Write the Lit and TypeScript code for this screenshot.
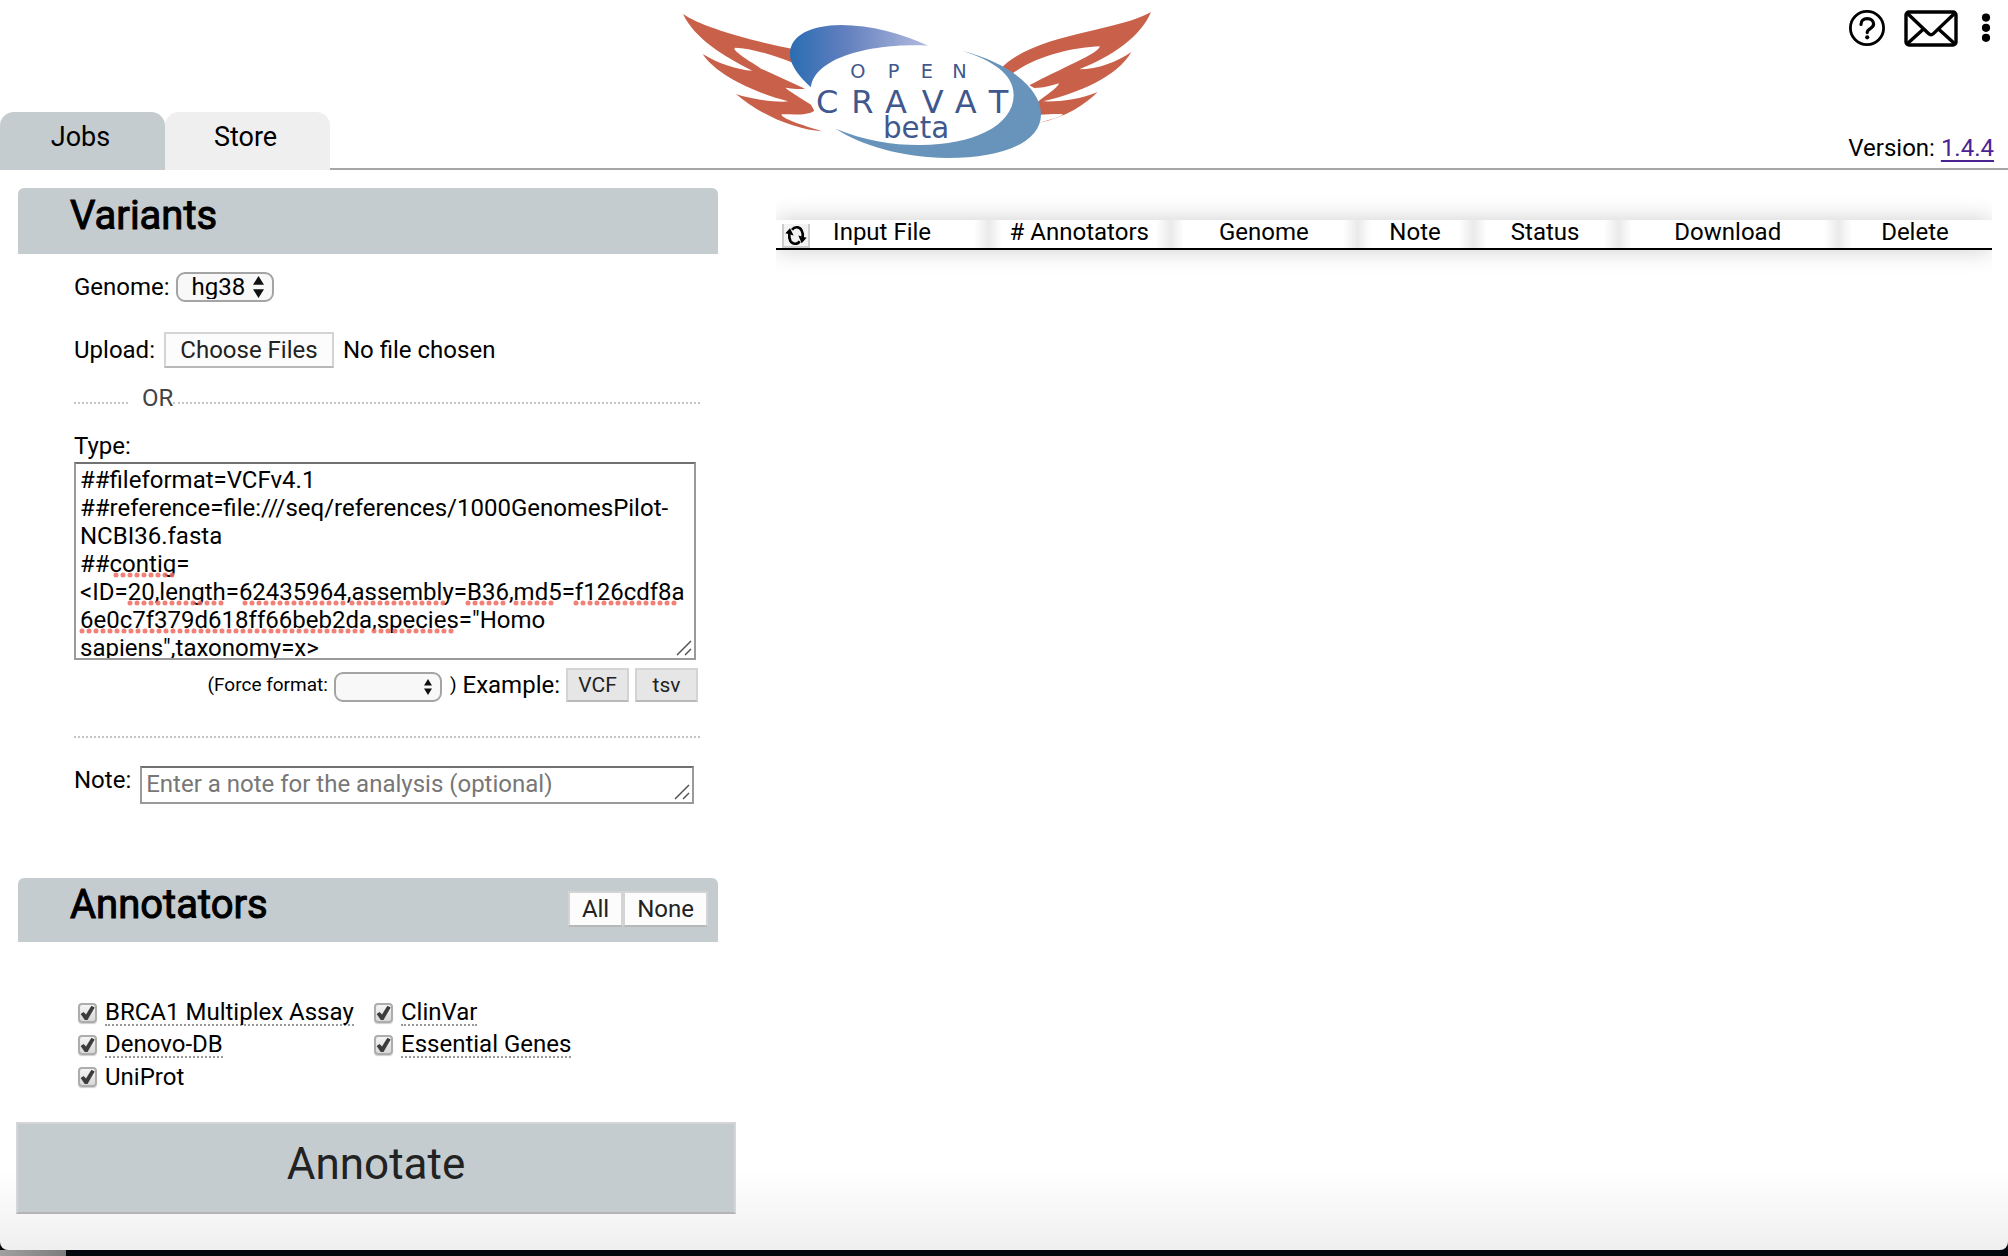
import { LitElement, html, css, svg } from "lit";
import { customElement } from "lit/decorators.js";

const JOB_COLUMNS = [
  { label: "Input File", width: 212 },
  { label: "# Annotators", width: 182 },
  { label: "Genome", width: 187 },
  { label: "Note", width: 115 },
  { label: "Status", width: 145 },
  { label: "Download", width: 220 },
  { label: "Delete", width: 154 },
];

const ANNOTATORS = [
  { id: "brca1", title: "BRCA1 Multiplex Assay", described: true },
  { id: "clinvar", title: "ClinVar", described: true },
  { id: "denovo", title: "Denovo-DB", described: true },
  { id: "essential", title: "Essential Genes", described: true },
  { id: "uniprot", title: "UniProt", described: false },
];

const SAMPLE = `##fileformat=VCFv4.1
##reference=file:///seq/references/1000GenomesPilot-NCBI36.fasta
##contig=
<ID=20,length=62435964,assembly=B36,md5=f126cdf8a6e0c7f379d618ff66beb2da,species="Homo sapiens",taxonomy=x>`;

const sortArrows = svg`<path d="M5 0L10 8H0Z M0 12H10L5 20Z" fill="#111"/>`;

@customElement("cravat-logo")
export class CravatLogo extends LitElement {
  static styles = css`
    :host { display: block; }
    .mark { display: block; width: 510px; height: 170px; }
    .word { font-family: "DejaVu Sans", sans-serif; fill: #3f588d; }
  `;

  render() {
    return html`
      <svg class="mark" viewBox="0 0 1530 510" role="img" aria-label="Open CRAVAT beta">
        <defs>
          <linearGradient id="swoosh" x1="0" x2="1">
            <stop offset="0" stop-color="#2a6db3" />
            <stop offset="0.4" stop-color="#627fbe" />
            <stop offset="1" stop-color="#b3bbdf" />
          </linearGradient>
        </defs>
        <g fill="#c9604a">
          <path d="M66 42C120 80 260 120 400 148L404 192C340 165 270 145 222 143C210 150 260 180 300 206L432 266C420 269 395 266 373 263C400 285 430 300 450 314L460 332C440 348 390 342 362 343C355 355 450 384 486 394C400 390 290 340 225 282C270 298 350 308 382 304C290 280 170 230 125 162C170 190 230 210 274 212C190 170 100 115 66 42Z" />
          <path d="M1470 36C1370 95 1120 100 1020 205L1052 222C1130 165 1240 142 1316 139C1318 158 1200 205 1105 256L1120 264C1150 264 1175 255 1194 250C1190 265 1155 285 1130 306L1136 344C1165 344 1190 340 1206 343C1200 350 1165 360 1130 370C1215 352 1275 312 1310 276C1260 298 1190 306 1146 304C1250 280 1370 230 1411 156C1370 185 1310 208 1255 208C1350 170 1440 110 1470 36Z" />
        </g>
        <path d="M905 153C1050 190 1142 270 1140 345C1138 430 1020 474 860 474C720 472 600 435 524 386C610 422 700 436 780 435C930 434 1058 380 1058 285C1058 220 990 180 905 153Z" fill="#6893bb" />
        <path d="M450 262C400 215 386 185 387 158C390 105 450 76 540 75C630 75 720 100 802 137C640 128 460 170 450 262Z" fill="url(#swoosh)" />
        <g class="word">
          <text x="568 680 779 874" y="233" font-size="58">OPEN</text>
          <text x="465 571 672 782 881 983" y="338" font-size="96">CRAVAT</text>
          <text x="666" y="415" font-size="88">beta</text>
        </g>
      </svg>
    `;
  }
}

@customElement("app-root")
export class AppRoot extends LitElement {
  static styles = css`
    :host {
      display: flex;
      flex-direction: column;
      min-height: 100vh;
      background: #05070f;
      color: #000;
      font-family: Roboto, "Liberation Sans", sans-serif;
      font-size: 24px;
      line-height: 28px;
    }
    *, *::before, *::after { box-sizing: border-box; }
    button, select, textarea, input { font: inherit; margin: 0; color: inherit; }
    .window {
      flex: 1;
      display: flex;
      flex-direction: column;
      background: linear-gradient(to top, #efefef, #fff 80px);
      border-radius: 0 0 8px 8px;
    }
    .desktop { height: 6px; width: 66px; background: linear-gradient(to right, #a0a0a0, #7c7c7c); }
    .header {
      display: grid;
      grid-template-columns: 661fr 510px 837fr;
      height: 170px;
      border-bottom: 2px solid #a6a6a6;
    }
    .tabs { display: flex; align-items: end; height: 170px; }
    .tab {
      width: 165px;
      height: 58px;
      padding: 0 4px 8px 0;
      border: 0;
      border-radius: 14px 14px 0 0;
      background: #efefef;
      font-size: 27px;
    }
    .tab.active { background: #c5ccd0; }
    .tools {
      display: flex;
      flex-direction: column;
      justify-content: space-between;
      align-items: end;
      padding: 9px 14px 8px 0;
    }
    .icons { display: flex; align-items: center; gap: 18px; }
    .icons button { display: block; padding: 0; border: 0; background: none; }
    .icons svg { display: block; }
    .version a { color: #4b2391; text-underline-offset: 4px; }
    .columns {
      display: grid;
      grid-template-columns: 720px 1fr;
      gap: 40px;
      padding: 18px 16px 34px;
    }
    .section-title {
      display: flex;
      align-items: center;
      justify-content: space-between;
      height: 66px;
      margin: 0 18px 0 2px;
      padding: 0 10px 10px 52px;
      background: #c5ccd0;
      border-radius: 6px 6px 0 0;
    }
    h2 { margin: 0; font-size: 40px; font-weight: 400; line-height: 48px; -webkit-text-stroke: 1px #000; }
    .form { padding: 0 36px 0 58px; }
    .line { display: flex; align-items: center; gap: 6px; }
    .genome { height: 30px; margin-top: 18px; }
    .upload { height: 36px; margin-top: 30px; gap: 9px; }
    .picker { position: relative; display: flex; align-items: center; }
    .picker select {
      appearance: none;
      width: 98px;
      height: 30px;
      padding: 0 14px;
      border: 2px solid #a4a4a4;
      border-radius: 9px;
      background: #f8f8f8;
      line-height: 24px;
    }
    .picker svg { position: absolute; right: 10px; pointer-events: none; }
    .picker.force { align-self: flex-end; margin-right: 2px; }
    .picker.force select { width: 108px; }
    .file { position: absolute; opacity: 0; width: 1px; height: 1px; }
    .btn {
      display: inline-flex;
      align-items: center;
      justify-content: center;
      border: 2px solid #d4d4d4;
      border-bottom-color: #b8b8b8;
      background: #fcfcfc;
      color: #222;
      padding: 0 12px;
      height: 36px;
    }
    .choose { width: 170px; }
    .or { display: flex; align-items: center; height: 28px; margin-top: 16px; color: #444; }
    .or::before, .or::after { content: ""; border-top: 2px dotted #c4c4c4; margin-top: 10px; }
    .or::before { width: 54px; margin-right: 14px; }
    .or::after { flex: 1; }
    .type { display: block; margin: 20px 0 2px; }
    .entry { position: relative; display: flex; }
    textarea {
      display: block;
      resize: none;
      overflow: hidden;
      border: 2px solid #9a9a9a;
      border-top-color: #717171;
      border-radius: 0;
      outline: 0;
      background: #fff;
    }
    .variants { flex: 1; height: 198px; margin-right: 4px; padding: 2px 4px; word-break: break-word; }
    .grip { position: absolute; right: 4px; bottom: 4px; pointer-events: none; }
    .entry.wide .grip { right: 8px; }
    .squiggles { position: absolute; left: 0; top: 0; pointer-events: none; }
    .below { justify-content: flex-end; height: 34px; margin: 8px 2px 0 0; }
    .below small { font-size: 19px; }
    .below .btn { height: 34px; width: 63px; background: #e6e6e6; font-size: 21px; padding: 0; }
    .rule { height: 2px; margin: 34px 0 28px; border: 0; border-top: 2px dotted #c4c4c4; }
    .note { display: flex; gap: 9px; margin-right: 6px; }
    .note .entry { flex: 1; }
    .note textarea { flex: 1; height: 38px; padding: 2px 4px; }
    .note textarea::placeholder { color: #777; opacity: 1; }
    .annot-title { margin-top: 74px; height: 64px; }
    .pair { display: flex; padding-top: 8px; }
    .annotators {
      display: grid;
      grid-template-columns: 296px 1fr;
      grid-auto-rows: 32px;
      margin: 55px 0 0 62px;
    }
    .annotator { display: flex; align-items: center; gap: 8px; }
    .check {
      appearance: none;
      width: 19px;
      height: 20px;
      border: 2px solid #adadad;
      border-radius: 4px;
      background: linear-gradient(#f5f5f5, #d8d8d8);
      box-shadow: 0 1px 1px #ccc;
      display: grid;
      place-items: center;
    }
    .check:checked::after {
      content: "";
      width: 15px;
      height: 15px;
      background: #3c3c3c;
      clip-path: polygon(4% 56%, 24% 44%, 40% 60%, 76% 2%, 98% 14%, 50% 96%, 32% 96%);
    }
    .name { line-height: 24px; }
    .described { border-bottom: 2px dotted #999; }
    .annotate {
      display: block;
      width: 100%;
      height: 92px;
      margin-top: 29px;
      padding: 0 0 8px;
      border: 2px solid #d3d5d6;
      border-bottom-color: #b5b3b5;
      background: #c5ccd0;
      color: #222;
      font-size: 44px;
    }
    .jobs { padding-top: 32px; }
    table {
      width: 100%;
      border-collapse: separate;
      border-spacing: 0;
      table-layout: fixed;
      border-bottom: 2px solid #000;
      box-shadow: 0 0 24px rgba(0, 0, 0, 0.2);
      clip-path: inset(-30px 0);
    }
    th {
      height: 28px;
      padding: 0;
      font-weight: 400;
      line-height: 24px;
      background: linear-gradient(to right, #e9e9e9, #fff 14px, #fff calc(100% - 14px), #ebebeb);
    }
    th:first-child { background: linear-gradient(to left, #ebebeb, #fff 14px); }
    th:last-child { background: linear-gradient(to right, #e9e9e9, #fff 14px); }
    .head { display: flex; height: 28px; }
    .head span { flex: 1; text-align: center; }
    .refresh {
      align-self: flex-end;
      width: 28px;
      height: 24px;
      margin: 0 -34px 0 6px;
      padding: 0;
      border: 2px solid #ccc;
      border-top: 0;
      background: #f3f3f3;
    }
    .refresh svg { display: block; margin: 0 auto; }
  `;

  private grip() {
    return html`<svg class="grip" width="16" height="16" viewBox="0 0 16 16" aria-hidden="true">
      <path d="M1 15L15 1M9 15L15 9" stroke="#555" stroke-width="1.5" fill="none" />
    </svg>`;
  }

  private arrows(height: number) {
    return html`<svg width=${height / 2} height=${height} viewBox="0 0 10 20" aria-hidden="true">${sortArrows}</svg>`;
  }

  render() {
    return html`
      <div class="window">
        <header class="header">
          <nav class="tabs">
            <button class="tab active">Jobs</button>
            <button class="tab">Store</button>
          </nav>
          <cravat-logo></cravat-logo>
          <div class="tools">
            <div class="icons">
              <button aria-label="Help">
                <svg width="38" height="38" viewBox="0 0 38 38" fill="none" stroke="#000">
                  <circle cx="19" cy="19" r="16.6" stroke-width="2.8" />
                  <path d="M13 15.4C13 11.8 15.4 9.6 19.2 9.6C23 9.6 25.6 11.8 25.6 15C25.6 20 19.2 19 19.2 23.6" stroke-width="3.2" stroke-linecap="round" />
                  <circle cx="19.2" cy="28.3" r="2.1" fill="#000" stroke="none" />
                </svg>
              </button>
              <button aria-label="Email">
                <svg width="54" height="38" viewBox="0 0 54 38" fill="none" stroke="#000" stroke-width="3.4">
                  <rect x="2" y="3" width="50" height="33" rx="3" />
                  <path d="M3 4L24.5 24.6C26 26 28 26 29.4 24.6L51 4M3 35L19.5 20M51 35L34.5 20" />
                </svg>
              </button>
              <button aria-label="Menu">
                <svg width="18" height="38" viewBox="0 0 18 38">
                  <circle cx="10" cy="8.6" r="4.1" />
                  <circle cx="10" cy="18.8" r="4.1" />
                  <circle cx="10" cy="28.8" r="4.1" />
                </svg>
              </button>
            </div>
            <div class="version">Version: <a href="#version">1.4.4</a></div>
          </div>
        </header>
        <main class="columns">
          <section>
            <div class="section-title"><h2>Variants</h2></div>
            <div class="form">
              <div class="line genome">
                <label for="genome">Genome:</label>
                <span class="picker">
                  <select id="genome"><option>hg38</option></select>
                  ${this.arrows(22)}
                </span>
              </div>
              <div class="line upload">
                <span>Upload:</span>
                <label class="btn choose" for="files">Choose Files</label>
                <input class="file" id="files" type="file" multiple />
                <span>No file chosen</span>
              </div>
              <div class="or">OR</div>
              <label class="type" for="variants">Type:</label>
              <div class="entry wide">
                <textarea class="variants" id="variants" spellcheck="false" .value=${SAMPLE}></textarea>
                <svg class="squiggles" width="622" height="198" viewBox="0 0 622 198" aria-hidden="true">
                  <path
                    d="M42 113H104M56 141H154M171 141H274M278 141H376M394 141H434M442 141H484M502 141H604M8 169H290M300 169H380"
                    fill="none" stroke="#ee6b5f" stroke-opacity="0.85" stroke-width="5" stroke-linecap="round" stroke-dasharray="0 7" />
                </svg>
                ${this.grip()}
              </div>
              <div class="line below">
                <small><label for="force">(Force format:</label></small>
                <span class="picker force">
                  <select id="force"><option></option></select>
                  ${this.arrows(16)}
                </span>
                <small>)</small>
                <span>Example:</span>
                <button class="btn">VCF</button>
                <button class="btn">tsv</button>
              </div>
              <hr class="rule" />
              <div class="note">
                <label for="note">Note:</label>
                <div class="entry">
                  <textarea id="note" placeholder="Enter a note for the analysis (optional)"></textarea>
                  ${this.grip()}
                </div>
              </div>
            </div>
            <div class="section-title annot-title">
              <h2>Annotators</h2>
              <div class="pair">
                <button class="btn">All</button>
                <button class="btn">None</button>
              </div>
            </div>
            <div class="annotators">
              ${ANNOTATORS.map(
                (a) => html`<div class="annotator">
                  <input class="check" type="checkbox" id=${a.id} checked />
                  <label class="name ${a.described ? "described" : ""}" for=${a.id}>${a.title}</label>
                </div>`
              )}
            </div>
            <button class="annotate">Annotate</button>
          </section>
          <section class="jobs">
            <table>
              <colgroup>
                ${JOB_COLUMNS.map((c) => html`<col style="width:${(c.width / 12.15).toFixed(2)}%" />`)}
              </colgroup>
              <thead>
                <tr>
                  ${JOB_COLUMNS.map(
                    (c, i) => html`<th scope="col">
                      <div class="head">
                        ${i === 0
                          ? html`<button class="refresh" aria-label="Refresh">
                              <svg width="22" height="21" viewBox="36 70 66 62" fill="none" stroke="#000" stroke-width="8">
                                <path d="M57 84C65 73 80 74 86 86C89 92 90 98 89 106" />
                                <path d="M80 118C73 129 58 128 52 117C49 111 48 105 49 97" />
                                <path d="M76 101L101 108L86 124ZM37 94L51 79L62 101Z" fill="#000" stroke="none" />
                              </svg>
                            </button>`
                          : ""}
                        <span>${c.label}</span>
                      </div>
                    </th>`
                  )}
                </tr>
              </thead>
            </table>
          </section>
        </main>
      </div>
      <div class="desktop"></div>
    `;
  }
}
